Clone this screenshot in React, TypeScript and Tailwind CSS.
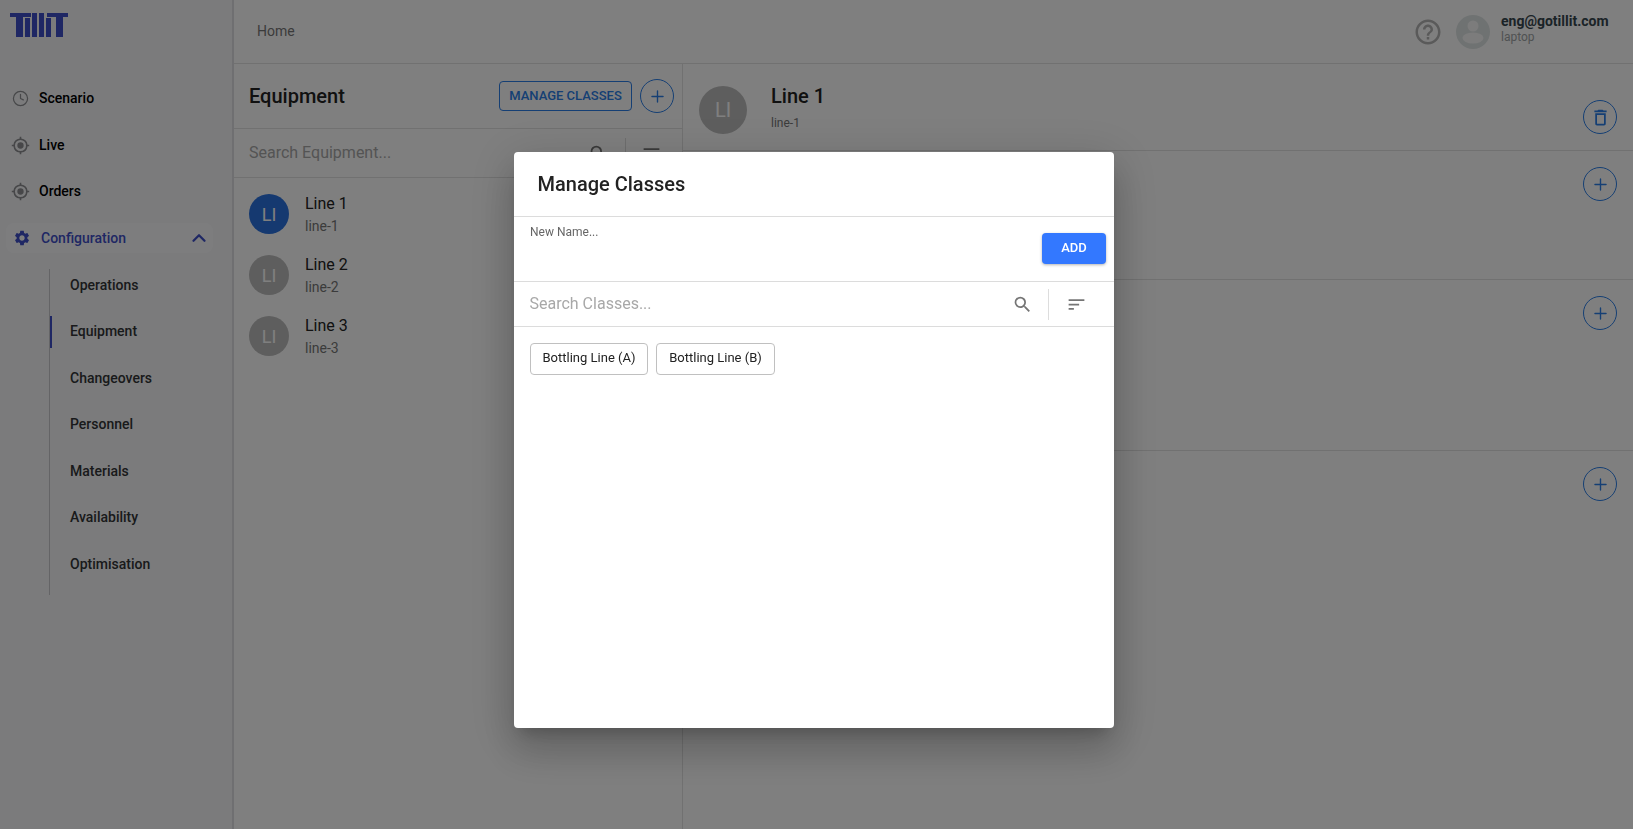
import { ChevronUp, Clock, Plus } from "lucide-react";

const subItems = ["Operations", "Equipment", "Changeovers", "Personnel", "Materials", "Availability", "Optimisation"];

function Target() {
  return (
    <svg width="19" height="19" viewBox="0 0 24 24" fill="#8e8f92">
      <path d="M12 8a4 4 0 1 0 0 8 4 4 0 0 0 0-8zm8.94 3A8.99 8.99 0 0 0 13 3.060V1h-2v2.060A8.99 8.99 0 0 0 3.060 11H1v2h2.060A8.99 8.99 0 0 0 11 20.940V23h2v-2.060A8.99 8.99 0 0 0 20.940 13H23v-2h-2.060zM12 19a7 7 0 1 1 0-14 7 7 0 0 1 0 14z" />
    </svg>
  );
}

function Logo() {
  return (
    <svg width="58" height="24" viewBox="0 0 58 24" fill="#3f4fc8">
      <path d="M0 0h21v4h-8v20H6V4H0z" />
      <path d="M15 5h5v19h-5zM22 0h5v24h-5zM29 0h5v24h-5zM36 5h5v19h-5zM37 0h21v4h-5v20h-7V4h-9z" />
    </svg>
  );
}

function SearchIcon() {
  return (
    <svg width="21" height="21" viewBox="0 0 24 24" fill="#757575">
      <path d="M15.500 14h-.79l-.28-.27A6.471 6.471 0 0 0 16 9.500 6.500 6.500 0 1 0 9.500 16c1.610 0 3.090-.59 4.230-1.570l.27.28v.79l5 4.990L20.490 19l-4.990-5zm-6 0C7.010 14 5 11.990 5 9.500S7.010 5 9.500 5 14 7.010 14 9.500 11.990 14 9.500 14z" />
    </svg>
  );
}

function SortIcon() {
  return (
    <svg width="21" height="21" viewBox="0 0 24 24" fill="#757575">
      <path d="M3 18h6v-2H3v2zM3 6v2h18V6H3zm0 7h12v-2H3v2z" />
    </svg>
  );
}

function CircleButton({ trash }: { trash?: boolean }) {
  return (
    <button className="flex h-[34px] w-[34px] items-center justify-center rounded-full border border-[#2a7ee8] text-[#2a7ee8]">
      {trash ? (
        <svg width="21" height="21" viewBox="0 0 24 24" fill="currentColor">
          <path d="M6 19c0 1.100.9 2 2 2h8c1.100 0 2-.9 2-2V7H6v12zM8 9h8v10H8V9zm7.500-5l-1-1h-5l-1 1H5v2h14V4h-3.500z" />
        </svg>
      ) : (
        <Plus size={19} strokeWidth={1.75} />
      )}
    </button>
  );
}

function Sidebar() {
  return (
    <aside className="flex h-full w-[234px] shrink-0 flex-col border-r-2 border-[#dedfe2] bg-[#f6f7f9]">
      <div className="h-[75px] pl-[10px] pt-[13px]">
        <Logo />
      </div>
      <nav className="flex flex-col text-[14px] font-medium text-black">
        <div className="flex h-[47px] items-center gap-[10px] pl-[12px]">
          <Clock size={17} color="#8e8f92" strokeWidth={1.75} />
          <span>Scenario</span>
        </div>
        <div className="flex h-[46px] items-center gap-[9px] pl-[11px]">
          <Target />
          <span>Live</span>
        </div>
        <div className="flex h-[47px] items-center gap-[9px] pl-[11px]">
          <Target />
          <span>Orders</span>
        </div>
        <div className="ml-[6px] mt-[8px] flex h-[30px] w-[207px] items-center rounded-lg bg-[#fbfbfd] pl-[7px] pr-[3px] text-[#3f4fc8]">
          <svg width="18" height="18" viewBox="0 0 24 24" fill="currentColor">
            <path d="M19.140 12.940c.04-.3.06-.61.06-.94 0-.32-.02-.64-.07-.94l2.030-1.580c.18-.14.23-.41.12-.61l-1.920-3.320c-.12-.22-.37-.29-.59-.22l-2.390.96c-.5-.38-1.030-.7-1.620-.94l-.36-2.540c-.04-.24-.24-.41-.48-.41h-3.840c-.24 0-.43.17-.47.41l-.36 2.540c-.59.24-1.130.57-1.620.94l-2.390-.96c-.22-.08-.47 0-.59.22L2.740 8.870c-.12.21-.08.47.12.61l2.030 1.580c-.05.3-.07.63-.07.94s.02.64.07.94l-2.030 1.580c-.18.14-.23.41-.12.61l1.920 3.320c.12.22.37.29.59.22l2.390-.96c.5.38 1.030.7 1.620.94l.36 2.540c.05.24.24.41.48.41h3.840c.24 0 .44-.17.47-.41l.36-2.540c.59-.24 1.130-.56 1.620-.94l2.390.96c.22.08.47 0 .59-.22l1.920-3.320c.12-.22.07-.47-.12-.61l-2.010-1.580zM12 15.600c-1.980 0-3.600-1.620-3.600-3.600s1.620-3.600 3.600-3.600 3.600 1.620 3.600 3.600-1.620 3.600-3.600 3.600z" />
          </svg>
          <span className="ml-[10px] flex-1">Configuration</span>
          <ChevronUp size={22} strokeWidth={2.5} />
        </div>
        <div className="ml-[49px] mt-[16.4px] flex w-[170px] flex-col gap-[14.5px] border-l border-[#c8c9cc] pb-[14.5px] font-medium text-[#333436]">
          {subItems.map((item) => (
            <div key={item} className="relative flex h-[32px] items-center pl-[20px]">
              {item === "Equipment" && <span className="absolute left-0 top-0 h-[32px] w-[2px] bg-[#3f4fc8]" />}
              {item}
            </div>
          ))}
        </div>
      </nav>
    </aside>
  );
}

function EquipmentPanel() {
  const rows = [
    { name: "Line 1", id: "line-1", active: true },
    { name: "Line 2", id: "line-2" },
    { name: "Line 3", id: "line-3" },
  ];
  return (
    <section className="w-[449px] shrink-0 border-r border-[#e2e2e2]">
      <div className="flex h-[65px] items-center border-b border-[#e2e2e2] pl-[15px] pr-[8px]">
        <h2 className="flex-1 text-[20px] font-medium text-[#222]">Equipment</h2>
        <button className="mr-[8px] h-[30px] w-[133px] rounded border border-[#2a7ee8] text-[13px] font-medium text-[#2a7ee8]">MANAGE CLASSES</button>
        <CircleButton />
      </div>
      <div className="flex h-[49px] items-center border-b border-[#e2e2e2] pl-[15px]">
        <span className="flex-1 text-[16px] text-[#a8a8a8]">Search Equipment...</span>
        <span className="mr-[16px]"><SearchIcon /></span>
        <span className="h-[31px] w-px bg-[#ddd]" />
        <span className="ml-[15px] mr-[20px]"><SortIcon /></span>
      </div>
      <div className="flex flex-col gap-[21px] pl-[15px] pt-[16px]">
        {rows.map((row) => (
          <div key={row.id} className="flex h-[40px] items-center">
            <div className={`flex h-[40px] w-[40px] items-center justify-center rounded-full text-[18px] text-white ${row.active ? "bg-[#2a72e0]" : "bg-[#bdbdbd]"}`}>LI</div>
            <div className="ml-[16px]">
              <div className="text-[16px] leading-[20px] text-[#222]">{row.name}</div>
              <div className="mt-[3px] text-[14px] leading-[18px] text-[#777]">{row.id}</div>
            </div>
          </div>
        ))}
      </div>
    </section>
  );
}

function DetailPanel() {
  return (
    <section className="min-w-0 flex-1 text-[#222]">
      <div className="flex h-[87px] border-b border-[#e2e2e2] pl-[16px] pr-[16px]">
        <div className="mt-[22px] flex h-[48px] w-[48px] items-center justify-center rounded-full bg-[#bdbdbd] text-[20px] text-white">LI</div>
        <div className="ml-[24px] flex-1 pt-[20px]">
          <div className="text-[20px] font-medium leading-[24px]">Line 1</div>
          <div className="mt-[6px] text-[12px] leading-[18px] text-[#777]">line-1</div>
        </div>
        <div className="pt-[36px]">
          <CircleButton trash />
        </div>
      </div>
      <div className="flex h-[129px] justify-end border-b border-[#e2e2e2] pr-[16px] pt-[16px]">
        <CircleButton />
      </div>
      <div className="flex h-[171px] justify-end border-b border-[#e2e2e2] pr-[16px] pt-[16px]">
        <CircleButton />
      </div>
      <div className="flex justify-end pr-[16px] pt-[16px]">
        <CircleButton />
      </div>
    </section>
  );
}

function Modal() {
  return (
    <div className="fixed inset-0 z-10 bg-black/50">
      <div className="absolute left-[514px] top-[152px] flex h-[576px] w-[600px] flex-col rounded bg-white shadow-[0_11px_15px_-7px_rgba(0,0,0,0.2),0_24px_38px_3px_rgba(0,0,0,0.14),0_9px_46px_8px_rgba(0,0,0,0.12)]">
        <div className="flex h-[65px] items-center border-b border-[#dcdcdc] pl-[23.5px] text-[20px] font-medium text-[#222]">Manage Classes</div>
        <div className="flex h-[65px] border-b border-[#dcdcdc] pl-[16px] pr-[8px]">
          <span className="flex-1 pt-[8px] text-[12px] leading-[14px] text-[#666]">New Name...</span>
          <button className="mt-[16px] h-[31px] w-[64px] rounded bg-[#3378ff] pb-[1px] text-[13px] font-medium text-white shadow-[0_1px_3px_rgba(0,0,0,0.3)]">ADD</button>
        </div>
        <div className="flex h-[45px] items-center border-b border-[#dcdcdc] pl-[15.5px]">
          <span className="flex-1 text-[16px] text-[#a8a8a8]">Search Classes...</span>
          <span className="mr-[15px]"><SearchIcon /></span>
          <span className="h-[31px] w-px bg-[#ddd]" />
          <span className="ml-[17px] mr-[27px]"><SortIcon /></span>
        </div>
        <div className="flex gap-[8px] pl-[16px] pt-[16px]">
          <span className="flex h-[32px] w-[118px] items-center justify-center rounded border border-[#c0c0c0] pb-[2px] text-[13px] text-[#222]">Bottling Line (A)</span>
          <span className="flex h-[32px] w-[119px] items-center justify-center rounded border border-[#c0c0c0] pb-[2px] text-[13px] text-[#222]">Bottling Line (B)</span>
        </div>
      </div>
    </div>
  );
}

export default function App() {
  return (
    <div className="flex h-[829px] w-[1633px] overflow-hidden bg-white font-['Roboto',sans-serif]">
      <Sidebar />
      <main className="flex min-w-0 flex-1 flex-col">
        <header className="flex h-[64px] shrink-0 items-center border-b border-[#e2e2e2] pl-[23px] pr-[24px]">
          <a className="flex-1 text-[14px] text-[#777]">Home</a>
          <svg width="30" height="30" viewBox="0 0 24 24" fill="#b4b4b4" className="mr-[13px]">
            <path d="M11 18h2v-2h-2v2zm1-16C6.480 2 2 6.480 2 12s4.480 10 10 10 10-4.480 10-10S17.520 2 12 2zm0 18c-4.410 0-8-3.590-8-8s3.590-8 8-8 8 3.590 8 8-3.590 8-8 8zm0-14c-2.210 0-4 1.790-4 4h2c0-1.100.9-2 2-2s2 .9 2 2c0 2-3 1.750-3 5h2c0-2.250 3-2.500 3-5 0-2.210-1.790-4-4-4z" />
          </svg>
          <svg width="34" height="34" viewBox="0 0 34 34" className="mr-[11px]">
            <circle cx="17" cy="17" r="17" fill="#dfe5e5" />
            <circle cx="17" cy="11" r="5.500" fill="#f8f8f8" />
            <ellipse cx="17" cy="23" rx="10.500" ry="5.500" fill="#f8f8f8" />
          </svg>
          <div className="mb-[7px] w-[108px]">
            <div className="text-[14px] font-bold leading-[16px] text-[#37474f]">eng@gotillit.com</div>
            <div className="mt-[1px] text-[12px] leading-[14px] text-[#a0a4a6]">laptop</div>
          </div>
        </header>
        <div className="flex min-h-0 flex-1">
          <EquipmentPanel />
          <DetailPanel />
        </div>
      </main>
      <Modal />
    </div>
  );
}
